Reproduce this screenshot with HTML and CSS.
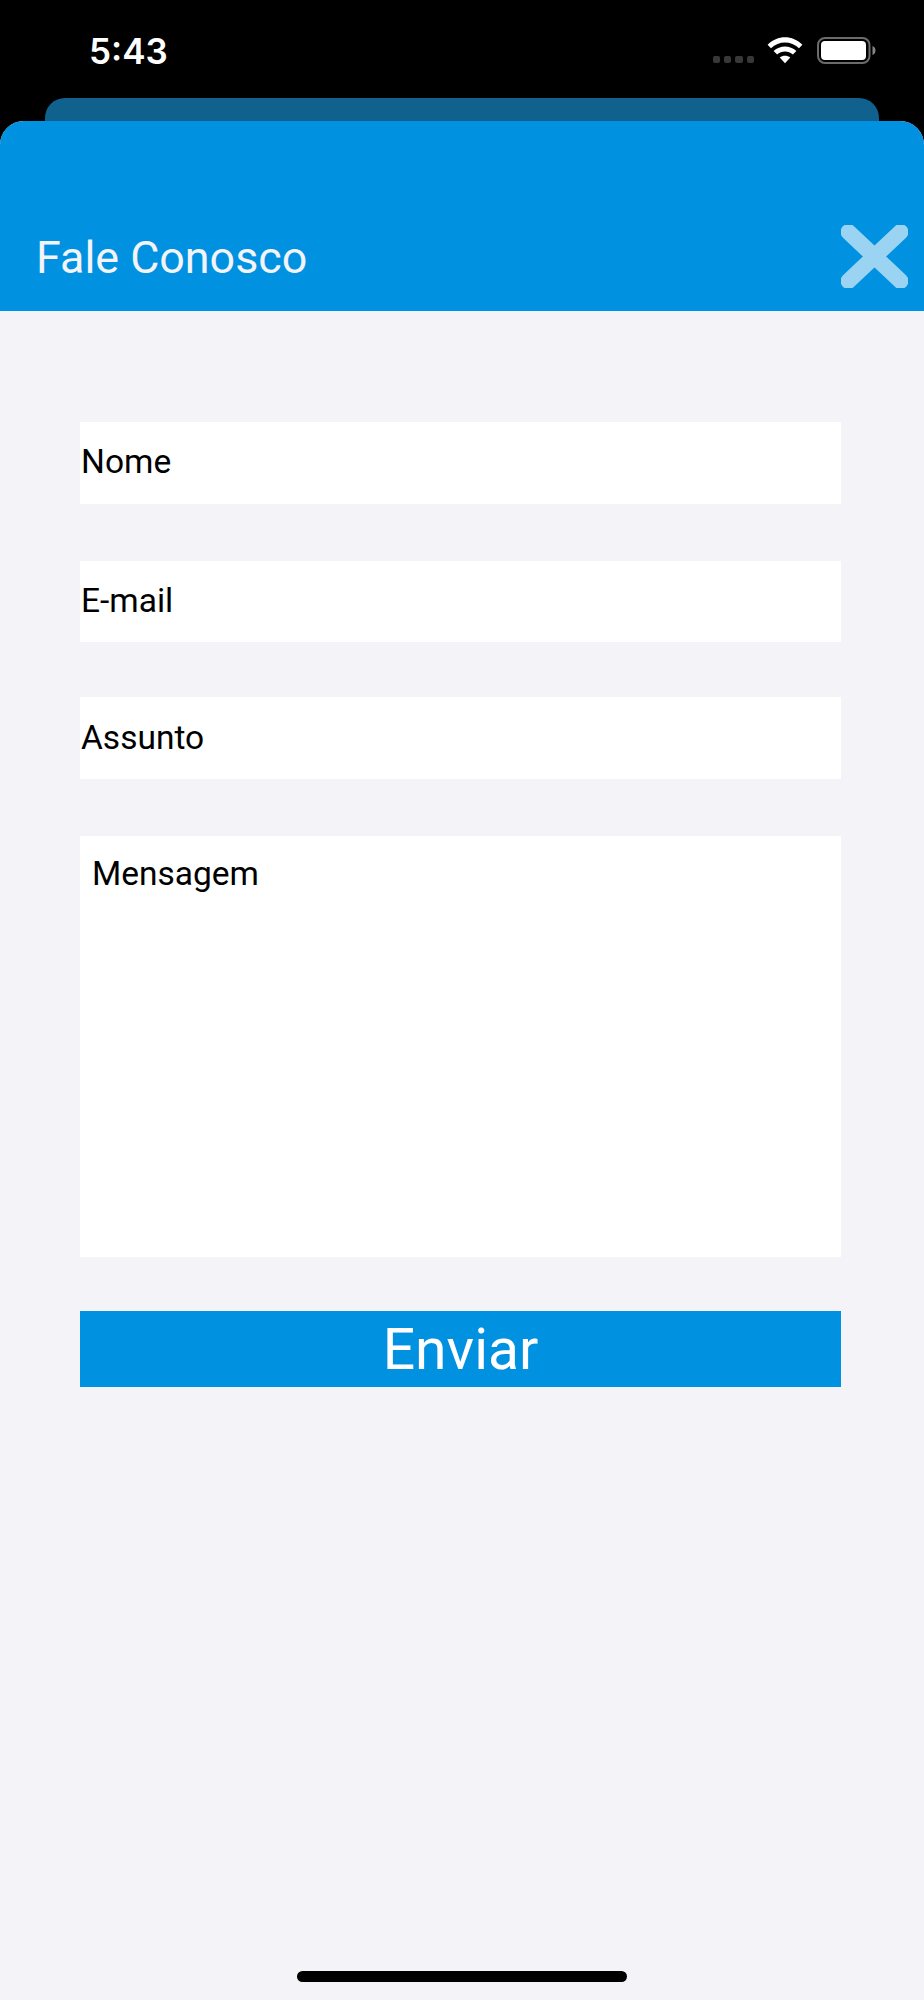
FILE: index.html
```html
<!DOCTYPE html>
<html lang="pt-BR">
<head>
  <meta charset="UTF-8">
  <title>Fale Conosco</title>
  <link rel="stylesheet" href="styles.css">
</head>
<body>
  <div class="status-bar">
    <span class="time">5:43</span>
    <div class="status-icons">
      <div class="signal"><i></i><i></i><i></i><i></i></div>
      <svg class="wifi" width="36" height="27" viewBox="0 0 36 27">
        <path fill="#fff" d="M.6 7.8C10.300-2.200 25.700-2.200 35.400 7.800L32 11.200C24.200 3.600 11.800 3.600 4 11.200Z"/>
        <path fill="#fff" d="M6.600 14C13 7.900 23 7.900 29.400 14L25.900 17.500C21.400 13.400 14.600 13.400 10.100 17.500Z"/>
        <path fill="#fff" d="M12.700 20.500C15.700 18 20.300 18 23.300 20.500L18 26.300Z"/>
      </svg>
      <svg class="battery" width="60" height="27" viewBox="0 0 60 27">
        <rect x="1" y="1" width="51.500" height="25" rx="7" fill="none" stroke="#6b6b6b" stroke-width="2"/>
        <rect x="4" y="4" width="45" height="19" rx="4" fill="#fff"/>
        <path fill="#858585" d="M55.500 9C59.500 10.500 59.500 16.500 55.500 18Z"/>
      </svg>
    </div>
  </div>

  <div class="back-card"></div>

  <div class="sheet">
    <header class="header">
      <h1>Fale Conosco</h1>
      <button class="close" type="button" aria-label="Fechar">
        <svg width="67" height="63" viewBox="0 0 67 63">
          <path d="M7.500 7L59.500 56M59.500 7L7.500 56" stroke="#9bd4f3" stroke-width="16" stroke-linecap="round"/>
        </svg>
      </button>
    </header>

    <form class="form">
      <input class="field" type="text" placeholder="Nome">
      <input class="field email" type="text" placeholder="E-mail">
      <input class="field subject" type="text" placeholder="Assunto">
      <textarea class="field message" placeholder="Mensagem"></textarea>
      <button class="send" type="button">Enviar</button>
    </form>

    <div class="home-indicator"></div>
  </div>
</body>
</html>
```

FILE: styles.css
```css
* {
  box-sizing: border-box;
}

body {
  margin: 0;
  height: 2000px;
  background: #000;
  font-family: Roboto, sans-serif;
  display: flex;
  flex-direction: column;
}

.status-bar {
  height: 98px;
  padding: 37px 47px 0 89px;
  display: flex;
  justify-content: space-between;
  align-items: flex-start;
  color: #fff;
}

.time {
  font-family: Inter, sans-serif;
  font-size: 35px;
  font-weight: 600;
  line-height: 28px;
}

.status-icons {
  display: flex;
  height: 27px;
}

.signal {
  display: flex;
  align-items: flex-end;
  gap: 4px;
  margin-right: 13px;
  padding-bottom: 1px;
}

.signal i {
  width: 7.3px;
  height: 7.3px;
  border-radius: 2px;
  background: #383838;
}

.battery {
  margin-left: 14px;
}

.back-card {
  height: 23px;
  margin: 0 45px;
  border-radius: 20px 20px 0 0;
  background: #10618e;
}

.sheet {
  flex: 1;
  display: flex;
  flex-direction: column;
  background: #f3f3f8;
  border-radius: 24px 24px 0 0;
  overflow: hidden;
}

.header {
  height: 190px;
  padding: 0 16px 23px 36px;
  display: flex;
  justify-content: space-between;
  align-items: flex-end;
  background: #0092e0;
}

h1 {
  margin: 0;
  font-size: 44.8px;
  font-weight: 400;
  line-height: 60px;
  color: #f3f3f8;
}

.close {
  padding: 0;
  border: 0;
  background: none;
}

.close svg {
  display: block;
}

.form {
  padding: 111px 83px 0 80px;
  display: flex;
  flex-direction: column;
}

.field {
  height: 82px;
  margin: 0 0 57px;
  padding: 0 0 3px 1px;
  border: 0;
  border-radius: 0;
  background: #fff;
  font-family: inherit;
  font-size: 33.5px;
}

.field::placeholder {
  color: #000;
  opacity: 1;
}

.email {
  height: 81px;
  margin-bottom: 55px;
}

.subject {
  padding-bottom: 2px;
}

.message {
  height: 421px;
  margin-bottom: 54px;
  padding: 18px 12px;
  line-height: 40px;
  resize: none;
}

.send {
  height: 76px;
  padding: 0;
  border: 0;
  background: #0092e0;
  color: #fff;
  font-family: inherit;
  font-size: 57px;
  line-height: 77px;
}

.home-indicator {
  width: 330px;
  height: 11px;
  margin: auto auto 18px;
  border-radius: 6px;
  background: #000;
}
```
